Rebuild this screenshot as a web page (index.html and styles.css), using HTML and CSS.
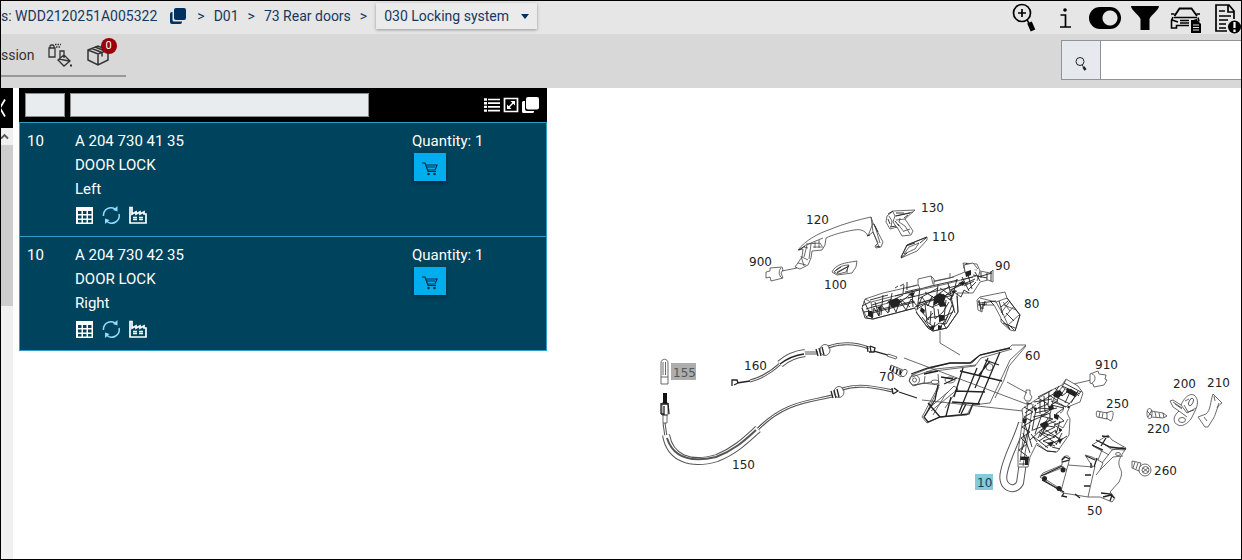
FILE: index.html
```
<!DOCTYPE html>
<html lang="en">
<head>
  <meta charset="UTF-8">
  <title>030 Locking system</title>
  <link rel="stylesheet" href="styles.css">
</head>
<body>
  <header class="topbar">
    <nav class="breadcrumb">
      <span class="vin">s: WDD2120251A005322</span>
      <button class="icon-btn copy-btn" aria-label="Copy">
        <svg width="16" height="16" viewBox="0 0 16 16"><rect x="4" y="0" width="12" height="12" rx="2" fill="#00315f"/><path d="M2.500 4v8a1.500 1.500 0 0 0 1.500 1.500h8V14a2 2 0 0 1-2 2H2a2 2 0 0 1-2-2V6a2 2 0 0 1 2-2z" fill="#00315f"/></svg>
      </button>
      <span>&gt;</span>
      <a href="#">D01</a>
      <span>&gt;</span>
      <a href="#">73 Rear doors</a>
      <span>&gt;</span>
      <div class="dropdown">
        <select aria-label="Subgroup">
          <option>030 Locking system</option>
        </select>
        <svg width="8" height="5" viewBox="0 0 8 5"><path d="M0 0h8L4 5z" fill="#00315f"/></svg>
      </div>
    </nav>
    <div class="actions">
      <button class="icon-btn" aria-label="Zoom in">
        <svg width="32" height="32" viewBox="0 0 32 32"><circle cx="13" cy="11" r="8.500" fill="none" stroke="#000" stroke-width="1.700"/><path d="M13 7v8M9 11h8" stroke="#000" stroke-width="1.700"/><path d="M18 18l2 3" stroke="#000" stroke-width="1.500"/><path d="M20.500 20.500l3.500 8" stroke="#000" stroke-width="5"/></svg>
      </button>
      <button class="icon-btn" aria-label="Information">
        <svg width="32" height="32" viewBox="0 0 32 32"><circle cx="16" cy="8" r="1.800" /><path d="M11.500 13h5v12M11 25h11" fill="none" stroke="#000" stroke-width="1.700"/></svg>
      </button>
      <input type="checkbox" class="toggle" aria-label="Toggle view" checked>
      <button class="icon-btn" aria-label="Filter">
        <svg width="32" height="32" viewBox="0 0 32 32"><path d="M2 4h28c0 4-8 9-9.500 13v11h-9V17C10 13 2 8 2 4z"/></svg>
      </button>
      <button class="icon-btn" aria-label="Vehicle data">
        <svg width="32" height="32" viewBox="0 0 32 32"><path d="M5.500 14l5-7.500h12L28 14" fill="none" stroke="#000" stroke-width="1.800"/><path d="M2 12h3.500M27.500 12H31M5 15.500h23M4 15l-1.500 3.500V26h5v-2.500H20M3 18l6 2M11 18.500h9M11 21h9M28 17.500l-5 2M29 15.500l1 4" fill="none" stroke="#000" stroke-width="1.600"/><path d="M22 18h6l4 4v9H22z"/><path d="M24 23h6M24 25.500h6M24 28h6" stroke="#e6e6e6"/></svg>
      </button>
      <button class="icon-btn" aria-label="Document notice">
        <svg width="32" height="32" viewBox="0 0 32 32"><path d="M18 29H7V3h13l5 6v8M19 3v7h6M10 9h6M10 14h12M10 18h9M10 22h7M10 26h7" fill="none" stroke="#000" stroke-width="1.700"/><circle cx="25.500" cy="25" r="6.500"/><path d="M25.500 20v6M25.500 27.500v2.500" stroke="#fff" stroke-width="2.200"/></svg>
      </button>
    </div>
  </header>

  <div class="toolbar">
    <div class="tabs">
      <span class="tab-label">ssion</span>
      <button class="icon-btn" aria-label="Paint and fluids">
        <svg width="26" height="26" viewBox="0 0 26 26" fill="none" stroke="#333" stroke-width="1.300"><path d="M2 6h6v9H2zM3 6V4l1-1h2l1 1v2"/><path d="M8 2.500h6M9 5h5" stroke-dasharray="1.500 1"/><path d="M17 13l6 6-6 5-6-6zM12 17l10 2M13 16V9h4v7"/><path d="M23 22.500h2v2h-2z" fill="#333" stroke="none"/></svg>
      </button>
      <button class="icon-btn box-btn" aria-label="Packages">
        <svg width="22" height="22" viewBox="0 0 22 22" fill="none" stroke="#333" stroke-width="1.500"><path d="M1 6l10-4 10 4v10l-10 5-10-5zM1 6l10 4 10-4M11 10v11M5 4.500l10 4v4M8 3l10 4"/></svg>
        <span class="badge">0</span>
      </button>
    </div>
    <form class="search">
      <button type="button" aria-label="Search">
        <svg width="12" height="16" viewBox="0 0 12 16" fill="none" stroke="#222"><circle cx="5" cy="5.500" r="4"/><path d="M7 9l1.500 2"/><path d="M8.500 11l2 3" stroke-width="2.500"/></svg>
      </button>
      <input type="text" aria-label="Search text">
    </form>
  </div>

  <main class="content">
    <aside class="side">
      <button class="collapse" aria-label="Collapse">
        <svg width="12" height="40" viewBox="0 0 12 40"><path d="M4 11.500l-5 8.500 5 8.500" fill="none" stroke="#fff" stroke-width="1.800"/></svg>
      </button>
      <div class="scrollbar">
        <svg width="12" height="17" viewBox="0 0 12 17"><path d="M0 10.500L3.500 7 7 10.500" fill="none" stroke="#555" stroke-width="1.800"/></svg>
        <div class="thumb"></div>
      </div>
    </aside>

    <section class="parts">
      <div class="parts-head">
        <input type="text" class="filter-pos" aria-label="Position">
        <input type="text" class="filter-part" aria-label="Part">
        <div class="head-icons">
          <button class="icon-btn" aria-label="List">
            <svg width="16" height="16" viewBox="0 0 16 16"><path d="M0 2.500h3M0 6.200h3M0 9.900h3M0 13.600h3" stroke="#fff" stroke-width="2.400"/><path d="M4 2.500H16M4 6.200H16M4 9.900H16M4 13.600H16" stroke="#fff" stroke-width="1.700"/></svg>
          </button>
          <button class="icon-btn" aria-label="Expand">
            <svg width="16" height="16" viewBox="0 0 16 16"><path d="M1.500 1.500h13v13h-13z" fill="none" stroke="#fff" stroke-width="1.700"/><path d="M5 11l6-6" stroke="#fff" stroke-width="1.500"/><path d="M7.500 4H12v4.500zM4 7.500V12h4.500z" fill="#fff"/></svg>
          </button>
          <button class="icon-btn" aria-label="Windows">
            <svg width="18" height="18" viewBox="0 0 18 18"><path d="M3 5H1.500A1.500 1.500 0 0 0 0 6.500v9A1.500 1.500 0 0 0 1.500 17h9a1.500 1.500 0 0 0 1.500-1.500V15H5a2 2 0 0 1-2-2z" fill="#fff"/><rect x="4" y="1" width="13" height="12.500" rx="2" fill="#fff"/></svg>
          </button>
        </div>
      </div>

      <article class="part">
        <div>10</div>
        <div>
          <p>A 204 730 41 35</p>
          <p>DOOR LOCK</p>
          <p>Left</p>
          <div class="part-icons">
            <button class="icon-btn" aria-label="Table"><svg width="18" height="18"><use href="#grid"/></svg></button>
            <button class="icon-btn" aria-label="Replacements"><svg width="18" height="18"><use href="#cycle"/></svg></button>
            <button class="icon-btn" aria-label="Plant"><svg width="18" height="18"><use href="#plant"/></svg></button>
          </div>
        </div>
        <div>
          <p>Quantity: 1</p>
          <button class="cart" aria-label="Add to cart"><svg width="16" height="14"><use href="#cart"/></svg></button>
        </div>
      </article>

      <article class="part">
        <div>10</div>
        <div>
          <p>A 204 730 42 35</p>
          <p>DOOR LOCK</p>
          <p>Right</p>
          <div class="part-icons">
            <button class="icon-btn" aria-label="Table"><svg width="18" height="18"><use href="#grid"/></svg></button>
            <button class="icon-btn" aria-label="Replacements"><svg width="18" height="18"><use href="#cycle"/></svg></button>
            <button class="icon-btn" aria-label="Plant"><svg width="18" height="18"><use href="#plant"/></svg></button>
          </div>
        </div>
        <div>
          <p>Quantity: 1</p>
          <button class="cart" aria-label="Add to cart"><svg width="16" height="14"><use href="#cart"/></svg></button>
        </div>
      </article>
    </section>

    <section class="drawing">
      <svg viewBox="547 88 694 471" class="diagram">
        <!-- door handle 120 and its connector 900 -->
        <g class="line">
          <path d="M798 250C806 240 817 234 831 229 843 224 857 220 871 217L873 223 883 242 881 247 876 248 875 246 878 243 873 232 868 236C865 230 860 229 854 230 842 232 832 235 826 238L825 245 822 250 812 251 811 258 808 265 800 269 795 267 802 257 803 249z"/>
          <path d="M871 217l2 15 6 15M875 226l5 17M868 236l5-13M799 250l7-5 17-7M806 244l14-1 2 3M804 247l4 1M807 245l-3 12M811 244l-2 15M813 247h10M802 257l6 3M798 263l8 2M801 256l3 10M815 242v6M819 240v8"/>
          <path d="M766 272l4-1v-3l12-1 1 3-2 3 2 5-12 3-1-4-4 1zM782 271l15-3M781 268c-3 3-2 8 1 10"/>
          <path d="M832 272c4-8 12-9 25-11l-1 6-4 6-15 2z"/>
          <path d="M834 272c5-6 11-7 15-7l-3 7-8 2zM837 272l10-5M848 265l-1 8"/>
          <path d="M887 216l6-5 22-1-10 9 8 12-2 4-9 1-5-9-7 2-4-7z"/>
          <path d="M893 212l2 4 18-4M895 216l-2 6 4 6M889 216l3 5-1 6M896 220l9-1M900 218l-1 4 6 4 5 8M904 231l6-2M898 224l6 8"/>
          <path d="M927 237l-20 8-6 13 16-7 10-11zM909 247l-5 7 11-5 4-6z"/>
        </g>
        <path class="ink" d="M888 219l2 5M888 214l5-3M890 227l6-1M896 213h8M896 216l14-3M904 218l4-3M895 221l4 5M901 258l6-5M901 257l6-12M926 238l-6 5M927 237l-20 8M906 246l9-3M799 250l6-4M867 236l3-1M874 224l4 8M876 246l4 1M835 271l6-4M837 273l12-7"/>

        <!-- bracket 90 -->
        <g class="line">
          <path d="M862 308l3-9 18-6 22-5 45-10 15-6-2-9 14 1 3 7 10 2 3-3v12l-5-2-8 2-7 11-16 0 1 19-11 16-14 3-5-3-11-15-2-5-42 11-6-1z" class="fill"/>
          <path d="M865 299l6 3 2 15M871 302l35-9 40-9 30-8M873 307l42-11M906 288l11-3M934 281l20-4M950 278v-5M967 263l2 12M963 267l14 3M980 271l-3 10"/>
          <path d="M940 331v12l20 12"/>
        </g>
        <path class="ink" d="M864 301l8 17 2-10 5 8 2-11 7 8 2-12 6 11 4-11 6 9 5-11 7 8 4-10 6 9 4-10 7 7 4-9 7 6 4-8 7 5 3-7 5 3M870 300l18-5M872 305l20-6M895 296l24-6M866 309l10-3M868 314l47-12M915 307l42-16M887 303l16-8M897 305l15-12M918 299l20-11M930 300l20-14M945 296l18-15M950 290l25-11M903 293l1-8M907 290v-8M926 288v-5M895 288l3-2M900 286l4-2"/>
        <path class="ink" d="M862 308l3 10 8 1 42-11M883 295l-2 20M892 293l-3 19M912 290l1 17M920 288l-3 22M938 285l-2 17M948 283l4 16M957 279l-4 16M962 277l7 14M968 275l4 14M874 311l40-10M905 292l53-12M908 298l60-15M918 303l36-8M875 302l4 14M862 306l8-4M864 312l6-1M866 317l6-4M940 288l13 9M925 292l11 7M900 299l10 8M978 277l14-4M980 281l-5-9"/>
        <path class="ink" d="M917 309l8-5 2 18 7 5 5-4 7 1 8-15-3-12M921 311l8 9M925 304l9 4 1 11M935 319l8-7M943 312l6-10M928 318l12-2M946 300l-2 18M935 322l-2 8M943 323l3 5M932 307l13-5M922 317l9 12M952 305l-8 20M927 326l7 3M948 316l-9 13M916 312l12 16 5 3 14-3 11-16M957 296l1 16M950 298l5 15M925 322l8-9M918 304l14-5M953 312l-10 5M931 311l-1 13M938 309l2 13M964 266l3-3M965 270l8-4M973 275l14 3M961 280l12-3M964 286l10-5M968 290l8-8M981 272v6M991 271v10M987 273v7"/>
        <path class="line fill" d="M918 284v-5l13-3 3 3v6l-14 4zM931 276l2 8M965 272l-1-7 9-2 5 6"/>
        <path class="blob" d="M888 301l9-3 4 3-3 5-6 2zM934 297l6-4 6 3-2 6 3 4-7 1-2-4-5 3zM868 311l4 0 1 7-5-2zM921 307l4 3-1 4-4-3zM929 327l6-2-2 6zM939 315l5 0 1 5-6 2zM965 272l6-2v5l-5 2zM908 294l7-2-2 5zM958 283l7-2-2 5zM938 325l4 1-1 4-3 0zM877 307l4-1-1 5zM951 291l5-1-2 4z"/>

        <!-- part 80 -->
        <path class="line" d="M977 300l3-3 25-5 2 6 13 17-5 16-5-1-9-8v-4l-7-13h-11l-1 7-4-2zM980 298l16 4 8 14 6 14M996 302l11-4M1003 302l7 9M1001 313l9-12M1004 318l10-12M1008 325l11-10M1004 305l12 5"/>
        <path class="ink" d="M978 301l4 8M978 305l9-1M980 303l16-2M983 303v6M979 300l2 11M985 301l-1 5M990 301l4 4M1001 319l9 10M1003 323l12 5M999 301l4 14M1009 325l5 5M1001 307l7-6M1006 313l8 8M1020 315l-5 16M1007 298l13 17"/>

        <!-- panel 60 -->
        <path class="line fill" d="M1026 345h-14l-3 3-29 7-8 8h-22l-23 6-15 6-3 6 4 5 10-3 16 2-17 32 5 6 13-6 27-2 5-10 18-2 13-28 7-15z"/>
        <g class="line">
          <path d="M1026 346l-17 20-5 14-9 18M981 358l31-9M975 366l6-8M926 372l49-6M912 377l23-8 41-4M939 387l-14 29M931 411l27-22M933 415l12-20 9-9 4 3-13 19M914 385l18-3M928 409l20-17M925 376l-1 8M938 374l1 12"/>
          <circle cx="914.500" cy="380" r="5"/>
          <circle cx="914.500" cy="380" r="2"/>
          <circle cx="989.500" cy="367" r="3.500"/>
          <ellipse cx="950" cy="380" rx="5" ry="3"/>
          <ellipse cx="935" cy="382" rx="4" ry="2"/>
        </g>
        <path class="bold" d="M924 374l14-3M911 374l17-6 22-5h20l10-8 30-7M963 368l-9 29M977 368l-18 45M1000 352l-22 52M988 358l-13 30M960 371l42 10M955 391l30 1M952 402l28 2M938 385l-3 15-11 17 4 5 12-5 29-3 4-10M928 403l12 14M951 397l-5 19M941 377l12 2M985 360l14 5M944 384l13-6M979 375l11-14M966 404l-5 10"/>

        <!-- leader lines -->
        <path class="line" d="M904 358l133 50M922 400l101 11M1007 382l20 11M1074 384l17-4"/>

        <!-- lock 10 with its cable -->
        <path class="tube" d="M1022 423C1017 440 1007 456 1004 472 1000 488 1015 493 1020 483L1023 462"/>
        <path class="tube-in" d="M1022 423C1017 440 1007 456 1004 472 1000 488 1015 493 1020 483L1023 462"/>
        <path class="line fill" d="M1052 390l10-5 4-6 12 7 5 7-3 9-10 4-3 7 3 6-1 16-12 17-10-1-10-8-7 14-2 10h-10v-14l5-36-1-8 15-10z"/>
        <path class="line" d="M1066 380l-4 7 15 8 5-4M1062 387l-9 13 13 7 11-12M1053 400l-4 20 14 8 5-9M1049 420l-8 16M1028 402l-8 60M1033 404l-10 62M1026 393v-3h4v4l2 3-2 4h-4l-2-3zM1045 412c5 0 7 6 4 9M1061 404c4 2 3 8-1 9"/>
        <path class="ink" d="M1038 398l10 6-10 4 14 1-11 7 12 3-13 6 15 2-12 6 12 4-12 4 12 5M1049 395l9 6-7 4 13 3-8 6 8 7-10 4 8 5-7 6 6 5M1055 388l7 8 9-7 8 7M1037 404l18-11M1035 413l22-5M1031 421l19-8M1033 430l23-9M1039 441l17-11M1045 447l16-8M1059 386l-5 8M1065 389l-8 11M1071 390l-6 13M1078 391l-7 12M1024 407l9 5-9 5 8 4-10 6 8 5-9 6 6 6-8 6 8 6M1020 457h9M1019 464h9M1037 442l-6-8M1040 437l5-9"/>
        <path class="ink" d="M1038 397l14-7M1034 402l18-3M1040 400v14M1044 396l1 16M1049 392l-1 14M1033 417l14-3M1036 409l-4 22M1042 414l-7 20M1048 418l-10 20M1030 440l12-11M1034 437l14 11M1039 432l18 12M1044 429l16 10M1037 445l10 6 9 1M1052 447l8 2M1060 421l-4 13M1062 433l-6 12M1067 436l-9 6M1024 421l8 26M1023 433l7 20M1030 425l-8 25M1026 403l6 1M1025 413l11-8M1062 386l18 8M1064 383l17 9M1054 396l16 8M1051 401l15 6"/>
        <path class="blob" d="M1054 392l6-2 3 4-5 4-5-2zM1048 406l5-1 1 4-5 1zM1040 424l6-3 3 4-5 5zM1067 388l10 5-2 4-9-5zM1021 457h8l-1 8h-3v-5h-5zM1054 414l5 1-1 5-4-2zM1047 443l7-2-3 6zM1023 418l4 1-1 4h-3zM1033 407l5 1-3 4zM1058 440l5-2-3 6z"/>
        <g class="blob"><circle cx="1068.500" cy="407" r="1.200"/><circle cx="1060" cy="430" r="1.200"/><circle cx="1056" cy="432" r="1"/></g>
        <path class="line fill" d="M1090 374l8-3 1 3 7 1-1 4 2 1-3 5-10 2-1-3-3-1zM1092 374c4 1 4 7 0 9"/>

        <!-- bracket 50 -->
        <path class="line fill" d="M1040 477l3-4 19-8v-6c2-4 7-4 8-1l-2 7 25 2-8-12 7 2 6 3 4-10-10-5 8-5 8-5 4 5 14 8c-3 6-10 12-6 20 3 5 1 9-1 14l-9 10 5 6-3 4-12-5h-12l-25-4z"/>
        <path class="line" d="M1068 465l-7 26M1044 475l20-8M1045 479l17 11M1062 466l5 4M1095 466l-7 31M1098 460l5 3-3 7-4 5M1102 463l10-13 12-3M1100 470l13-13 10-1M1104 444l7 5 14 1M1093 446l16 9"/>
        <path class="bold" d="M1086 456l9 4M1092 445l11 5M1096 440l14 7 16 2M1102 436l7 1M1106 438l-5 8M1085 475h6M1084 486h6M1091 463v5M1097 458l-3 9M1042 480l22 12M1041 476l21-10M1062 460l3-3 5 2M1062 462l7-2M1064 493l-2 3 5 1M1075 494l5 4M1101 493l10 1 3 4M1103 497l8-2M1110 501l2-6"/>
        <g class="blob"><circle cx="1044.500" cy="478.500" r="2.500"/><circle cx="1063" cy="470" r="2.500"/><circle cx="1059" cy="488.500" r="2.500"/></g>
        <ellipse class="line" cx="1118" cy="454" rx="2.500" ry="1.500"/>

        <!-- screws -->
        <g class="line fill">
          <path d="M1097 411l10 2v6l-10-2c-1-2-1-4 0-6zM1100 412l-1 5M1103 413l-1 5M1106 413l6-2c2 1 1 7-1 10l-5-3"/>
          <path d="M1151 411l12 2 4 3-4 2-12-1M1155 412l1 5M1159 413l1 5M1163 413l1 5"/>
          <ellipse cx="1149.500" cy="413.500" rx="2.500" ry="5"/>
          <path d="M1147 411l5 5M1152 410l-4 7"/>
          <path d="M1132 461l9 2-2 8-7-3zM1135 462l-2 6M1138 463l-2 6"/>
          <circle cx="1145" cy="470" r="6"/>
          <circle cx="1145.500" cy="470" r="3.500"/>
          <path d="M1143 468l5 4M1143 472l5-4"/>
          <path d="M891 365l12 5-2 7-11-7zM894 366l-1 6M897 367l-1 7M900 369l-1 6"/>
          <ellipse cx="904" cy="373" rx="2.500" ry="4" transform="rotate(30 904 373)"/>
        </g>
        <path class="bold" d="M891 366l-1 4M894 367l-2 5M898 369l-2 5M901 370l-1 5"/>

        <!-- striker 200 and shim 210 -->
        <path class="line fill" d="M1170 401l3-1 8 5c3-7 8-12 13-10 5 4 4 10 1 16l-4 8c-4 5-9 8-13 6-5-2-5-8-1-12l2-2-6-4z"/>
        <path class="line" d="M1181 405l6 8M1184 405l4 7 6-2M1185 401l4-2M1179 411l8 6M1175 404l7 5M1187 413l9-5M1173 402l9 6"/>
        <ellipse class="line" cx="1191" cy="402" rx="2" ry="4" transform="rotate(25 1191 402)"/>
        <ellipse class="line" cx="1182" cy="420" rx="3.500" ry="2.500"/>
        <path class="line fill" d="M1213 394l9 9c-6 3-5 10-9 16l-5 8-3 0-7-10 8-3c5-4 4-12 7-20zM1219 403l-2 5M1204 417l3 4M1214 396l1 5"/>

        <!-- cable 160 -->
        <g class="wire">
          <path d="M750 381C762 378 771 372 780 364"/>
          <path d="M804 353h14"/>
          <path d="M828 347C842 342 856 343 869 348"/>
        </g>
        <g class="wire-in">
          <path d="M750 381C762 378 771 372 780 364"/>
          <path d="M804 353h14"/>
          <path d="M828 347C842 342 856 343 869 348"/>
        </g>
        <path class="sheath" d="M780 364C788 357 796 354 805 353"/>
        <path class="sheath-in" d="M780 364C788 357 796 354 805 353"/>
        <path class="bold" d="M780 364C788 358 796 355 804 354M732 386v-6h5l1 3-4 2M737 383l13-2M816 349l2 7M819 348l2 8M822 347l2 8M867 346l1 6M870 346l1 6M869 352l5 0 1-4-5-2M874 351l14 4"/>
        <ellipse class="line" cx="825" cy="350" rx="5" ry="5.500"/>
        <path class="line fill" d="M888 354l9 3-1 2-9-3z"/>

        <!-- cable 150 with cap 155 -->
        <g class="wire">
          <path d="M664 423L666 437"/>
          <path d="M757 430C784 402 808 402 832 396"/>
          <path d="M842 389C860 383 878 388 893 391"/>
        </g>
        <g class="wire-in">
          <path d="M664 423L666 437"/>
          <path d="M757 430C784 402 808 402 832 396"/>
          <path d="M842 389C860 383 878 388 893 391"/>
        </g>
        <path class="sheath" d="M666 435C670 458 690 466 717 458 735 451 747 439 758 429"/>
        <path class="sheath-in" d="M666 435C670 458 690 466 717 458 735 451 747 439 758 429"/>
        <path class="core" d="M667 438C673 457 690 463 716 457 735 450 746 439 756 430"/>
        <path class="bold" d="M831 391l2 7M834 390l2 8M837 389l2 8M892 388l1 6M894 388l4 3-5 3M899 392l18 6"/>
        <ellipse class="line" cx="839" cy="392" rx="5" ry="5.500"/>
        <path class="line fill" d="M661 384v-21c0-5 7-5 7 0v21zM661 377h7M663 362v13M665.500 362v13M662 403h6v12h-6zM663 415h4v8h-4z"/>
        <path class="thread" d="M665 393v11"/>
        <path class="bold" d="M661 403v11M668 403l1 11M664 406v9M661 404h7M661 414h3"/>

        <rect class="mark-grey" x="671" y="363" width="25" height="17"/>
        <rect class="mark-blue" x="975" y="474" width="18" height="16"/>
        <g class="labels">
          <text x="806" y="224">120</text>
          <text x="921" y="212">130</text>
          <text x="932" y="241">110</text>
          <text x="995" y="270">90</text>
          <text x="749" y="266">900</text>
          <text x="824" y="289">100</text>
          <text x="1024" y="308">80</text>
          <text x="1025" y="360">60</text>
          <text x="744" y="370">160</text>
          <text x="673" y="377" class="muted">155</text>
          <text x="879" y="381">70</text>
          <text x="1095" y="369">910</text>
          <text x="1106" y="408">250</text>
          <text x="1173" y="388">200</text>
          <text x="1207" y="387">210</text>
          <text x="1147" y="433">220</text>
          <text x="1154" y="475">260</text>
          <text x="977" y="487" class="selected">10</text>
          <text x="1087" y="515">50</text>
          <text x="732" y="469">150</text>
        </g>
      </svg>
    </section>
  </main>

  <svg class="symbols">
    <symbol id="grid" viewBox="0 0 18 18"><path d="M1 1h17v17H1zM3 5v3h3.500V5zM8 5v3h3.500V5zM13 5v3h3.500V5zM3 9.500v3h3.500v-3zM8 9.500v3h3.500v-3zM13 9.500v3h3.500v-3zM3 14v2.500h3.500V14zM8 14v2.500h3.500V14zM13 14v2.500h3.500V14z" fill="#fff" fill-rule="evenodd"/></symbol>
    <symbol id="cycle" viewBox="0 0 18 18"><path d="M1.500 10A7.500 7.500 0 0 1 13 3M17 8A7.500 7.500 0 0 1 5 15.500" fill="none" stroke="#8fdcff" stroke-width="1.500"/><path d="M15.500 0v5.500L11 4zM3 12.500l4.500 1.500L3 18z" fill="#8fdcff"/></symbol>
    <symbol id="plant" viewBox="0 0 18 18"><path d="M1 17V1.500h2V8l4-2v2l4-2v2l4-2v2h2v9z" fill="none" stroke="#fff" stroke-width="1.700"/><path d="M4 11.500h4M10 11.500h4M4 13.500h4M10 13.500h4" stroke="#fff" stroke-width="1.300"/></symbol>
    <symbol id="cart" viewBox="0 0 16 14"><path d="M0 1h3l3 8.500h8M4 3h11l-2 5H6M5 5h8" fill="none" stroke="#0b2f45" stroke-width="1.200"/><circle cx="6.500" cy="12" r="1.300" fill="#0b2f45"/><circle cx="12.500" cy="12" r="1.300" fill="#0b2f45"/></symbol>
  </svg>
</body>
</html>
```
FILE: styles.css
```
* {
  box-sizing: border-box;
}

body {
  margin: 0;
  min-height: 100vh;
  display: flex;
  flex-direction: column;
  border: 1px solid #000;
  background-color: #fff;
  font-family: Roboto, "Liberation Sans", sans-serif;
  font-size: 15px;
  overflow: hidden;
}

p {
  margin: 0;
}

button,
input,
select {
  font: inherit;
  margin: 0;
  padding: 0;
}

svg {
  display: block;
}

.icon-btn {
  border: none;
  background: none;
  cursor: pointer;
}

/* top bar */
.topbar {
  display: flex;
  justify-content: space-between;
  height: 33px;
  background-color: #e6e6e6;
}

.breadcrumb {
  display: flex;
  align-items: center;
  gap: 9px;
  height: 30px;
  color: #17385c;
  font-size: 14px;
  white-space: nowrap;
}

.breadcrumb a {
  color: inherit;
  text-decoration: none;
}

.copy-btn {
  margin: 0 2px 0 4px;
}

.dropdown {
  display: grid;
  align-items: center;
  height: 26px;
  background-color: #ebebeb;
  box-shadow: 0 1px 3px rgba(0, 0, 0, 0.35);
}

.dropdown select,
.dropdown svg {
  grid-area: 1 / 1;
}

.dropdown select {
  appearance: none;
  border: none;
  background: none;
  color: inherit;
  padding: 0 28px 0 8px;
}

.dropdown svg {
  justify-self: end;
  margin-right: 8px;
  pointer-events: none;
}

.actions {
  display: flex;
  align-items: center;
  gap: 8px;
}

.actions .icon-btn {
  width: 32px;
}

.toggle {
  appearance: none;
  width: 32px;
  height: 22px;
  border-radius: 11px;
  background: radial-gradient(circle at 21px 11px, #e6e6e6 7px, #000 8px);
}

/* toolbar */
.toolbar {
  display: flex;
  justify-content: space-between;
  height: 54px;
  background-color: #d8d8d8;
}

.tabs {
  display: flex;
  align-items: center;
  gap: 12px;
  height: 43px;
  padding-right: 17px;
  border-bottom: 2px solid #999;
  color: #333;
}

.tab-label {
  font-size: 14px;
}

.box-btn {
  position: relative;
  margin-left: 2px;
}

.badge {
  position: absolute;
  top: -6px;
  right: -8px;
  width: 16px;
  height: 16px;
  border-radius: 50%;
  background-color: #9b0008;
  color: #fff;
  font-size: 11px;
  line-height: 16px;
}

.search {
  display: flex;
  width: 180px;
  height: 40px;
  margin-top: 6px;
  border: 1px solid #8f9396;
  border-right: none;
}

.search button {
  display: grid;
  place-items: center;
  flex: 0 0 39px;
  padding-top: 8px;
  border: none;
  border-right: 1px solid #8f9396;
  background-color: #e6eaee;
}

.search input {
  flex: 1;
  min-width: 0;
  border: none;
  background-color: #fff;
}

/* content */
.content {
  display: flex;
  flex: 1;
  min-height: 0;
}

.side {
  display: flex;
  flex-direction: column;
  flex: 0 0 12px;
  margin-right: 6px;
}

.collapse {
  height: 40px;
  border: none;
  background-color: #000;
}

.scrollbar {
  flex: 1;
  background-color: #f0f0f0;
}

.thumb {
  height: 161px;
  background-color: #cdcdcd;
}

.parts {
  flex: 0 1 528px;
}

.parts-head {
  display: flex;
  align-items: center;
  gap: 5px;
  height: 34px;
  padding: 0 7px 0 6px;
  background-color: #000;
}

.parts-head input {
  height: 24px;
  border: 1px solid #8c8c8c;
  background-color: #e9ecef;
}

.filter-pos {
  width: 40px;
}

.filter-part {
  width: 299px;
}

.head-icons {
  display: flex;
  align-items: center;
  gap: 3px;
  margin-left: auto;
}

.part {
  display: grid;
  grid-template-columns: 48px 1fr 134px;
  height: 114px;
  padding: 6px 0 0 7px;
  border: 1px solid #319dcb;
  border-bottom: none;
  background-color: #00435d;
  color: #fff;
  line-height: 24px;
}

.part:last-child {
  height: 115px;
  border-bottom: 1px solid #319dcb;
}

.part-icons {
  display: flex;
  gap: 9px;
  padding-top: 5px;
}

.cart {
  display: grid;
  place-items: center;
  width: 32px;
  height: 28px;
  margin-left: 2px;
  padding-top: 4px;
  border: none;
  background-color: #00adef;
  box-shadow: 0 2px 4px rgba(0, 0, 0, 0.4);
  cursor: pointer;
}

/* exploded drawing */
.drawing {
  flex: 1;
  min-width: 0;
}

.diagram {
  width: 100%;
  height: 100%;
}

.line {
  fill: none;
  stroke: #444;
  stroke-width: 0.8;
}

.fill {
  fill: #fff;
}

.ink {
  fill: none;
  stroke: #222;
  stroke-width: 0.9;
}

.bold {
  fill: none;
  stroke: #222;
  stroke-width: 1.3;
}

.blob {
  fill: #222;
}

.tube,
.tube-in,
.wire,
.wire-in,
.sheath,
.sheath-in,
.core {
  fill: none;
  stroke: #555;
}

.tube {
  stroke-width: 8;
}

.tube-in {
  stroke: #fff;
  stroke-width: 6;
}

.wire {
  stroke-width: 3;
}

.wire-in {
  stroke: #fff;
  stroke-width: 1;
}

.sheath {
  stroke-width: 8;
}

.sheath-in {
  stroke: #fff;
  stroke-width: 6;
}

.core {
  stroke-width: 2;
}

.thread {
  stroke: #111;
  stroke-width: 4;
}

.mark-grey {
  fill: #adadad;
}

.mark-blue {
  fill: #86c8dc;
}

.labels {
  font-family: "DejaVu Sans", sans-serif;
  font-size: 12px;
  fill: #222;
}

.labels .muted {
  fill: #555;
}

.labels .selected {
  fill: #12405f;
}

.symbols {
  position: absolute;
  width: 0;
  height: 0;
}
```
